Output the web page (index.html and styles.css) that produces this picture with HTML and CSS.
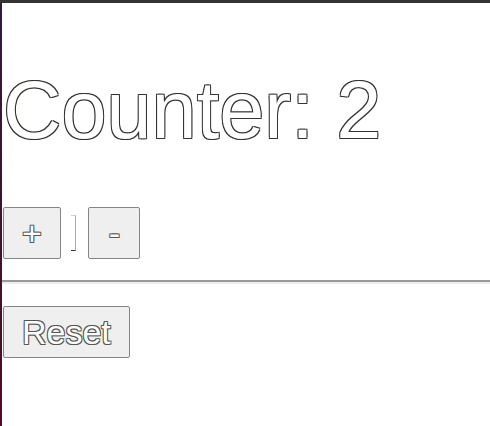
FILE: index.html
```html
<!DOCTYPE html>
<html>
<head>
<meta charset="utf-8">
<link rel="stylesheet" href="styles.css">
</head>
<body>
<div class="topbar"></div>
<div class="page">
  <h1 class="title">Counter: 2</h1>
  <div class="controls">
    <button class="btn">+</button>
    <span class="count"></span>
    <button class="btn btn-minus">-</button>
  </div>
  <hr class="rule">
  <div class="reset-row">
    <button class="btn">Reset</button>
  </div>
</div>
</body>
</html>
```

FILE: styles.css
```css
html, body {
  margin: 0;
  padding: 0;
  height: 100%;
  background: #fff;
}
body {
  font-family: "Liberation Sans", Arial, sans-serif;
  display: flex;
  flex-direction: column;
}
.topbar {
  height: 3px;
  background: #333333;
  flex: none;
}
.page {
  flex: 1;
  border-left: 2px solid #3a1d4a;
  border-image: linear-gradient(#33193f, #4e0c1f) 1;
  padding-left: 1px;
}
.title {
  margin: 61px 0 0 0;
  font-size: 81px;
  font-weight: normal;
  line-height: 92px;
  color: #fff;
  text-shadow: 1px 1px 0 #333, -1px -1px 0 #333, 1px -1px 0 #333, -1px 1px 0 #333;
}
.controls {
  margin-top: 51px;
  display: flex;
  align-items: center;
}
.btn {
  font-family: "Liberation Sans", Arial, sans-serif;
  font-size: 34px;
  line-height: 38px;
  padding: 6px 18px;
  margin: 0;
  background: #efefef;
  border: 1px solid #858585;
  border-radius: 2px;
  color: #fff;
  text-shadow: 1px 1px 0 #555, -1px -1px 0 #555, 1px -1px 0 #555, -1px 1px 0 #555;
}
.btn-minus {
  padding: 6px 19px 6px 20px;
}
.count {
  width: 4px;
  height: 34px;
  margin: 0 12px 0 10px;
  border-top: 1px solid #cccccc;
  border-right: 1px solid #aaaaaa;
  border-bottom: 1px solid #333333;
}
.rule {
  margin: 21px 0 0 -1px;
  border: 0;
  border-top: 2px solid #9a9a9a;
  border-bottom: 2px solid #eeeeee;
  height: 0;
}
.reset-row {
  margin-top: 22px;
}
```
